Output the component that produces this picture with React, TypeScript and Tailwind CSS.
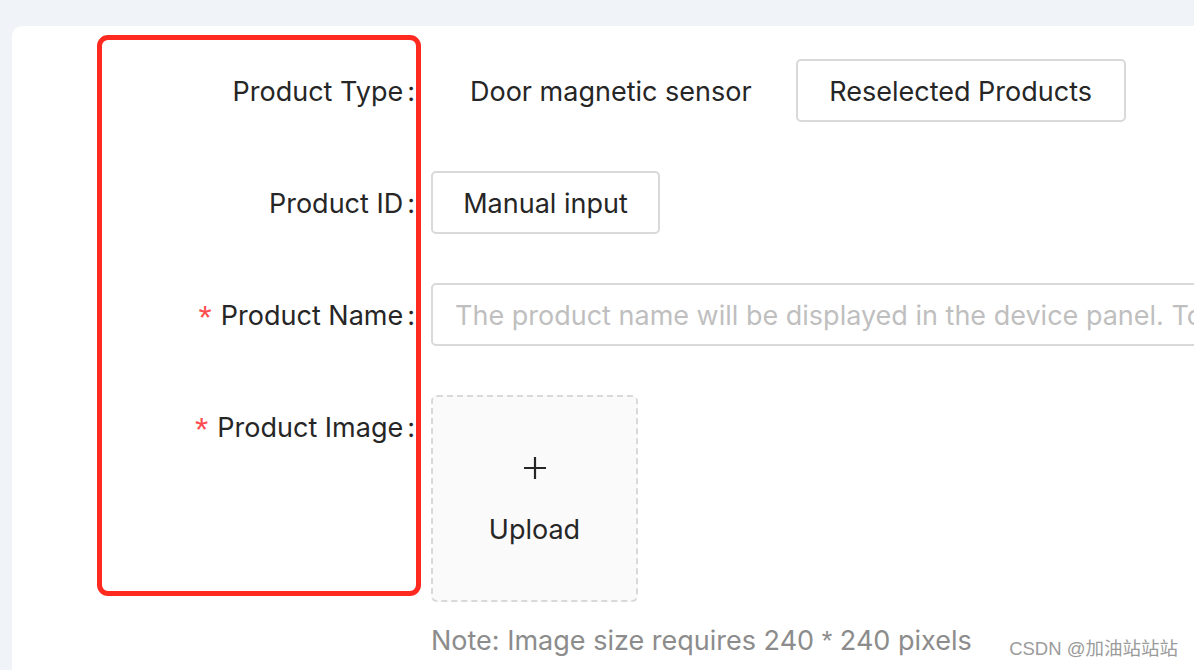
import React from "react";

const font = { fontFamily: 'Inter, "Noto Sans CJK SC", sans-serif' };
const lib = { fontFamily: '"Liberation Sans", sans-serif' };

function Label({ text, required }: { text: string; required?: boolean }) {
  return (
    <div className="flex h-[63px] w-[419px] shrink-0 items-center justify-end pr-[16px] pt-[4px] text-[27px] text-[#262626]">
      {required && (
        <span className="mr-[9px] text-[34px] leading-none text-[#ff4d4f]" style={lib}>
          *
        </span>
      )}
      <span>{text}</span>
      <span className="ml-[4px]">:</span>
    </div>
  );
}

export default function App() {
  return (
    <div
      className="relative h-[670px] w-[1194px] overflow-hidden bg-[#f0f3f7] pl-[12px] pt-[26px]"
      style={font}
    >
      <div className="relative h-full w-[1300px] rounded-tl-[10px] bg-white pt-[33px]">
        <div className="flex flex-col gap-[49px]">
          <div className="flex items-start">
            <Label text="Product Type" />
            <div className="flex h-[63px] items-center">
              <span className="ml-[39px] pt-[4px] text-[27px] text-[#262626]">Door magnetic sensor</span>
              <button className="ml-[44px] flex h-[63px] w-[330px] items-center justify-center rounded-[5px] border-2 border-[#d9d9d9] bg-white pt-[4px] text-[27px] text-[#262626]">
                Reselected Products
              </button>
            </div>
          </div>

          <div className="flex items-start">
            <Label text="Product ID" />
            <button className="flex h-[63px] w-[229px] items-center justify-center rounded-[5px] border-2 border-[#d9d9d9] bg-white pt-[4px] text-[27px] text-[#262626]">
              Manual input
            </button>
          </div>

          <div className="flex items-start">
            <Label text="Product Name" required />
            <div className="flex h-[63px] w-[820px] items-center overflow-hidden whitespace-nowrap rounded-[5px] border-2 border-[#d9d9d9] bg-white pl-[22px] pt-[4px] text-[27px] text-[#bfbfbf]">
              The product name will be displayed in the device panel. To ensure
            </div>
          </div>

          <div className="flex items-start">
            <Label text="Product Image" required />
            <div className="flex flex-col">
              <div className="flex h-[207px] w-[207px] flex-col items-center justify-center rounded-[6px] border-2 border-dashed border-[#d9d9d9] bg-[#fafafa]">
                <svg width="24" height="24" viewBox="0 0 24 24" className="mb-[32px] mt-[6px]">
                  <path d="M12 1v22M1 12h22" stroke="#262626" strokeWidth="2.2" fill="none" />
                </svg>
                <span className="text-[27px] leading-[36px] text-[#262626]">Upload</span>
              </div>
              <div className="mt-[19px] text-[27px] leading-[40px] text-[#8c8c8c]">
                Note: Image size requires 240 <span style={lib}>*</span> 240 pixels
              </div>
            </div>
          </div>
        </div>

        <div className="pointer-events-none absolute left-[85px] top-[9px] h-[561px] w-[324px] rounded-[11px] border-[5px] border-[#fe2a1f]" />
      </div>

      <div
        className="absolute bottom-[7px] right-[16px] text-[18.5px] text-[#9b9b9b]"
        style={{ fontFamily: '"Liberation Sans", "Noto Sans CJK SC", sans-serif' }}
      >
        CSDN @加油站站站
      </div>
    </div>
  );
}
